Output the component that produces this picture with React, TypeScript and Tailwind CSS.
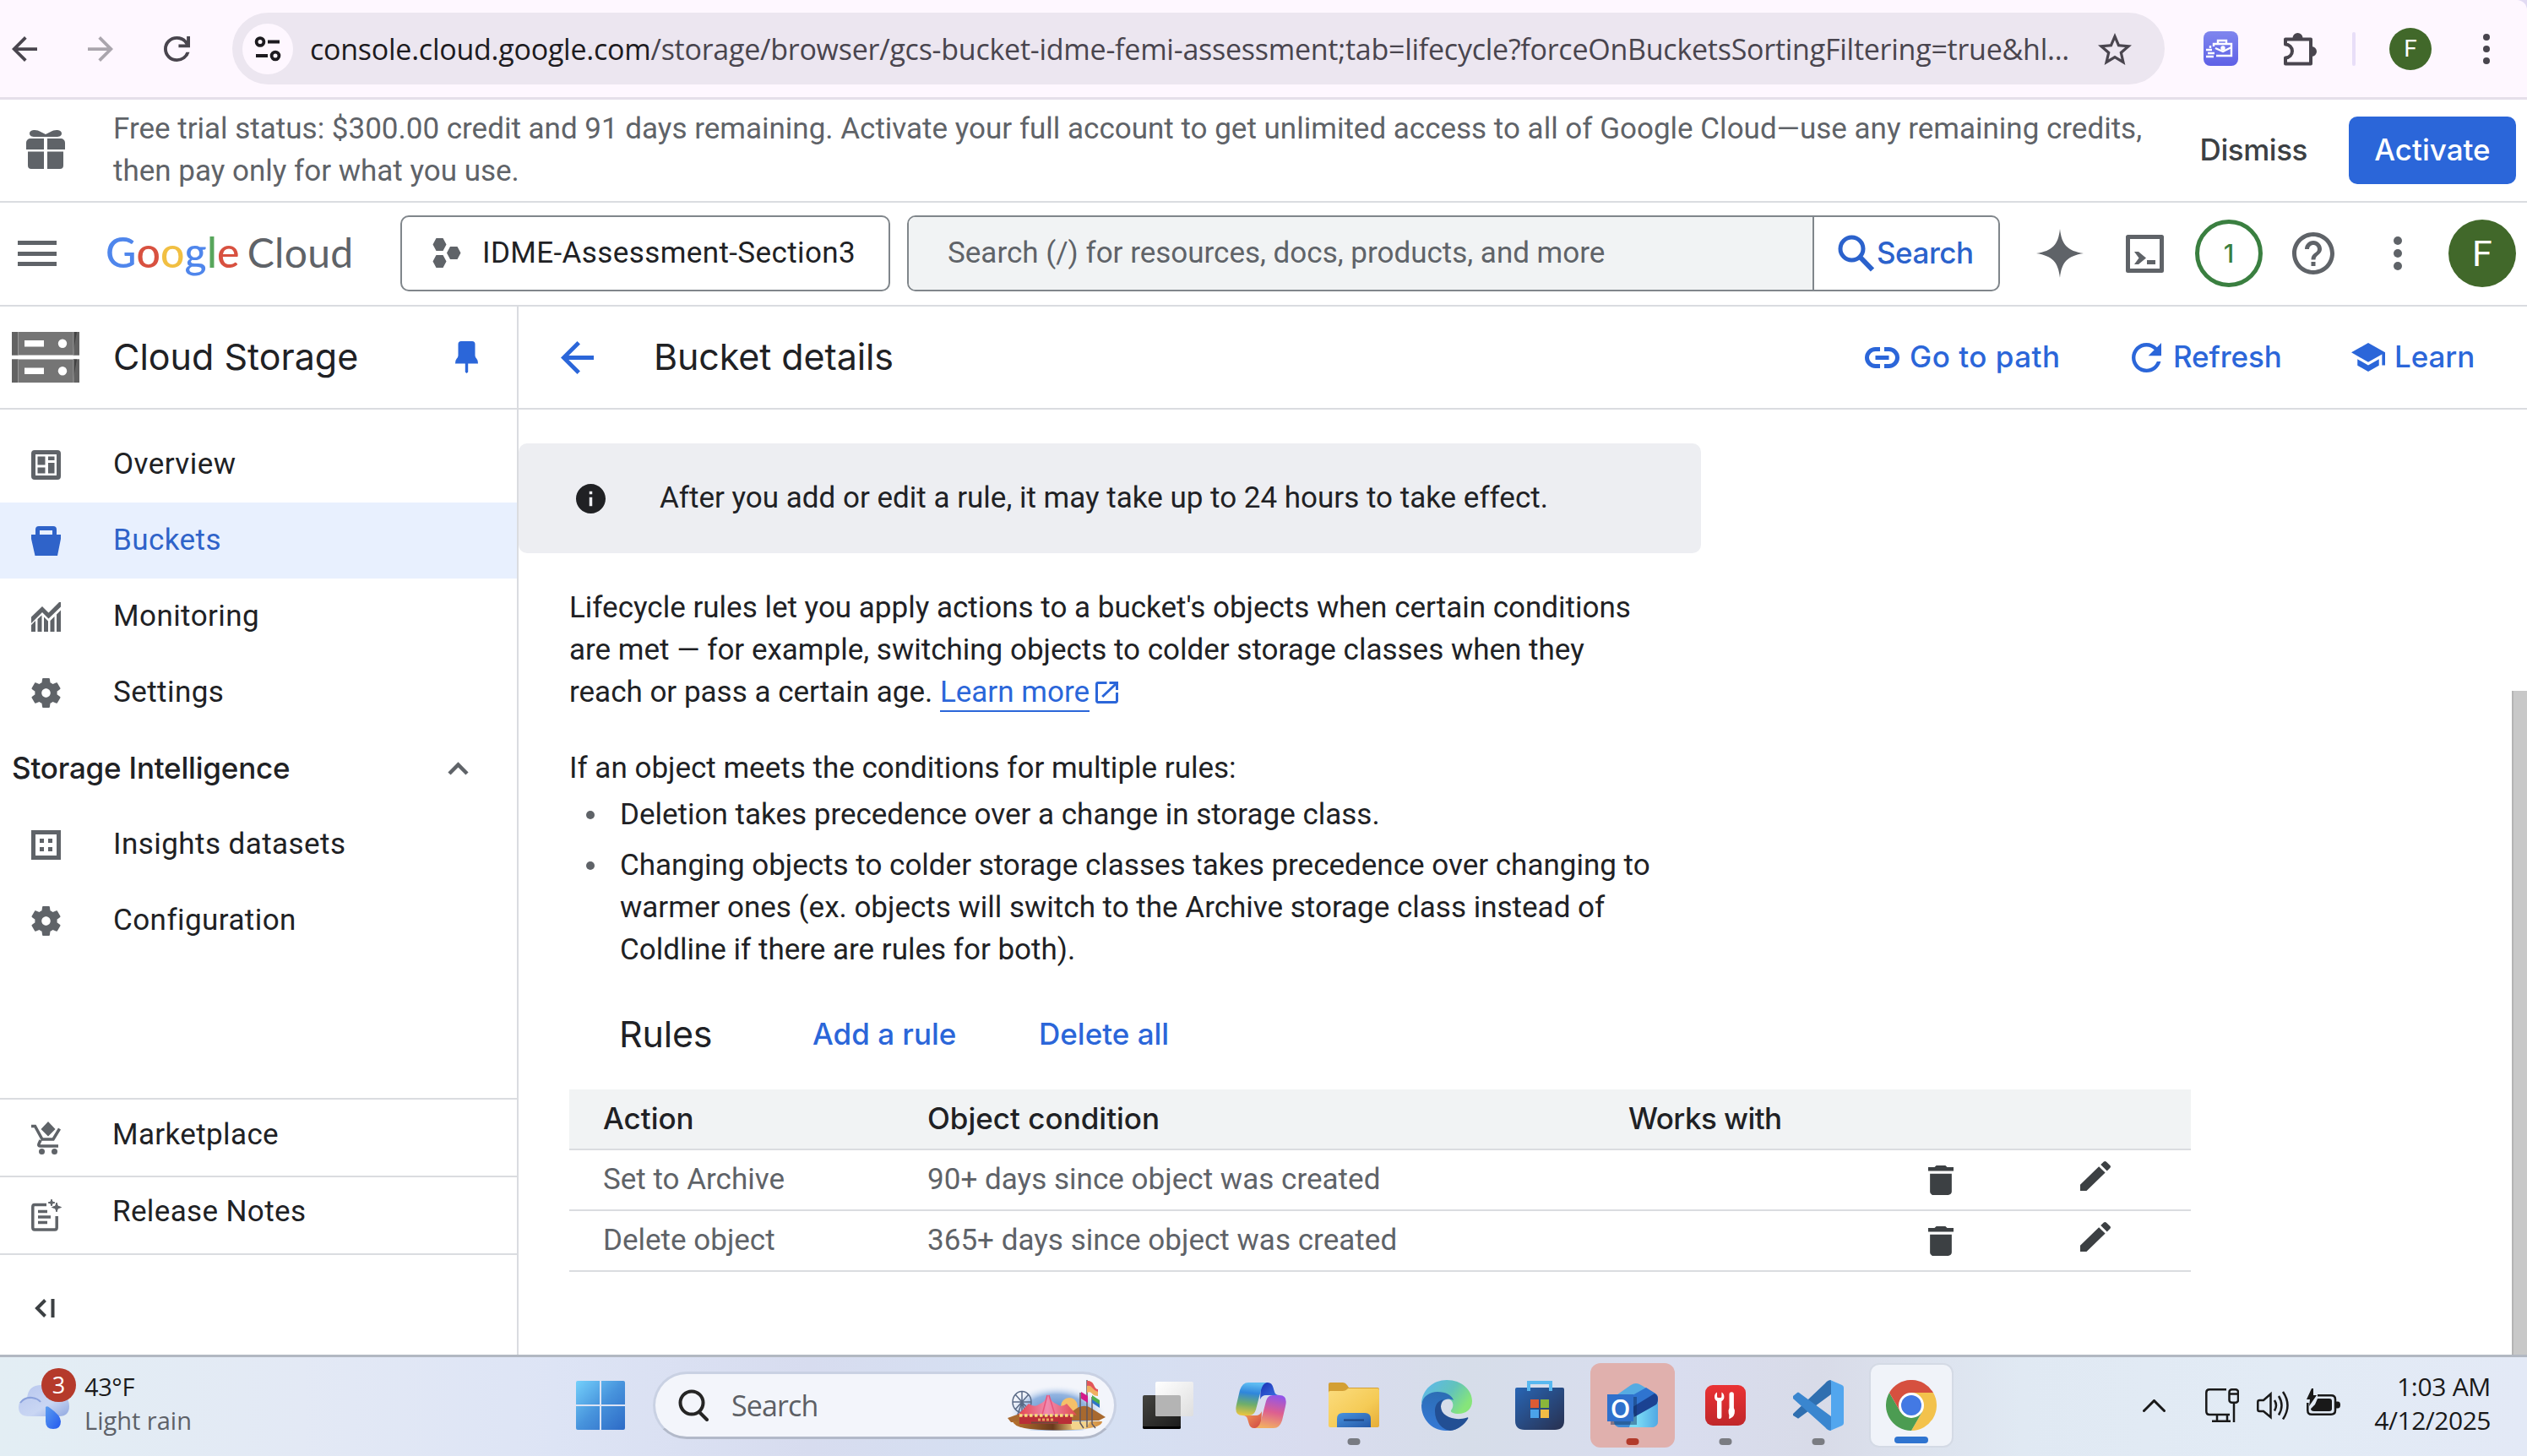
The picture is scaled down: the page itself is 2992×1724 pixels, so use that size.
import type { ReactNode } from "react";

type IconProps = { box: string; className: string; d?: string; children?: ReactNode };

function Icon({ box, className, d, children }: IconProps) {
  return (
    <svg viewBox={box} preserveAspectRatio="none" fill="currentColor" className={`block shrink-0 overflow-visible ${className}`}>
      {d ? <path d={d} /> : null}
      {children}
    </svg>
  );
}

const paths = {
  back: "M20 11H7.83l5.59-5.59L12 4l-8 8 8 8 1.41-1.41L7.83 13H20v-2z",
  forward: "M12 4l-1.41 1.41L16.17 11H4v2h12.17l-5.58 5.59L12 20l8-8z",
  reload:
    "M12 20q-3.35 0-5.675-2.325Q4 15.35 4 12q0-3.35 2.325-5.675Q8.65 4 12 4q1.725 0 3.3.713 1.575.712 2.7 2.037V4h2v7h-7V9h4.2q-.8-1.4-2.187-2.2Q13.625 6 12 6 9.5 6 7.75 7.75T6 12q0 2.5 1.75 4.25T12 18q1.925 0 3.475-1.1T17.65 14h2.1q-.7 2.65-2.85 4.325Q14.75 20 12 20Z",
  refresh:
    "M17.65 6.35C16.2 4.9 14.21 4 12 4c-4.42 0-7.99 3.58-7.99 8s3.57 8 7.99 8c3.73 0 6.84-2.55 7.73-6h-2.08c-.82 2.33-3.04 4-5.65 4-3.31 0-6-2.69-6-6s2.69-6 6-6c1.66 0 3.14.69 4.22 1.78L13 11h7V4l-2.35 2.35z",
  star: "M22 9.24l-7.19-.62L12 2 9.19 8.63 2 9.24l5.46 4.73L5.82 21 12 17.27 18.18 21l-1.63-7.03L22 9.24zM12 15.4l-3.76 2.27 1-4.28-3.32-2.88 4.38-.38L12 6.1l1.71 4.04 4.38.38-3.32 2.88 1 4.28L12 15.4z",
  help: "M11 18h2v-2h-2v2zm1-16C6.48 2 2 6.48 2 12s4.48 10 10 10 10-4.48 10-10S17.52 2 12 2zm0 18c-4.41 0-8-3.59-8-8s3.59-8 8-8 8 3.59 8 8-3.59 8-8 8zm0-14c-2.21 0-4 1.79-4 4h2c0-1.1.9-2 2-2s2 .9 2 2c0 2-3 1.75-3 5h2c0-2.25 3-2.5 3-5 0-2.21-1.79-4-4-4z",
  school: "M5 13.18v4L12 21l7-3.82v-4L12 17l-7-3.82zM12 3L1 9l11 6 9-4.91V17h2V9L12 3z",
  gear: "M19.43 12.98c.04-.32.07-.64.07-.98s-.03-.66-.07-.98l2.11-1.65c.19-.15.24-.42.12-.64l-2-3.46c-.12-.22-.39-.3-.61-.22l-2.49 1c-.52-.4-1.08-.73-1.69-.98l-.38-2.65C14.46 2.18 14.25 2 14 2h-4c-.25 0-.46.18-.49.42l-.38 2.65c-.61.25-1.17.59-1.69.98l-2.49-1c-.23-.09-.49 0-.61.22l-2 3.46c-.13.22-.07.49.12.64l2.11 1.65c-.04.32-.07.65-.07.98s.03.66.07.98l-2.11 1.65c-.19.15-.24.42-.12.64l2 3.46c.12.22.39.3.61.22l2.49-1c.52.4 1.08.73 1.69.98l.38 2.65c.03.24.24.42.49.42h4c.25 0 .46-.18.49-.42l.38-2.65c.61-.25 1.17-.59 1.69-.98l2.49 1c.23.09.49 0 .61-.22l2-3.46c.12-.22.07-.49-.12-.64l-2.11-1.65zM12 15c-1.66 0-3-1.34-3-3s1.34-3 3-3 3 1.34 3 3-1.34 3-3 3z",
  trash: "M6 19c0 1.1.9 2 2 2h8c1.1 0 2-.9 2-2V8H6v11zM19 4h-3.5l-1-1h-5l-1 1H5v2.4h14V4z",
  edit: "M3 17.25V21h3.75L17.81 9.94l-3.75-3.75L3 17.25zM20.71 7.04c.39-.39.39-1.02 0-1.41l-2.34-2.34c-.39-.39-1.02-.39-1.41 0l-1.83 1.83 3.75 3.75 1.83-1.83z",
  info: "M12 2C6.48 2 2 6.48 2 12s4.48 10 10 10 10-4.48 10-10S17.52 2 12 2zm1 15h-2v-6h2v6zm0-8h-2V7h2v2z",
  external:
    "M19 19H5V5h7V3H5c-1.11 0-2 .9-2 2v14c0 1.1.89 2 2 2h14c1.1 0 2-.9 2-2v-7h-2v7zM14 3v2h3.59l-9.83 9.83 1.41 1.41L19 6.41V10h2V3h-7z",
};

function BrowserBar() {
  return (
    <div className="h-[118px] shrink-0 bg-[#e2dbf3]">
      <div className="flex h-[118px] items-center rounded-tr-[12px] border-b-[3px] border-[#e5dfea] bg-[#fef7ff] pl-[14px] text-[#49454e]">
        <Icon box="4 4 16 16" className="h-[30px] w-[30px]" d={paths.back} />
        <Icon box="4 4 16 16" className="ml-[60px] h-[30px] w-[30px] text-[#aaa5ad]" d={paths.forward} />
        <Icon box="4 4 16 16" className="ml-[60px] h-[30px] w-[31px]" d={paths.reload} />
        <div className="ml-[50px] flex h-[85px] w-[2288px] items-center rounded-full bg-[#ece6f0] pl-3">
          <div className="flex h-[60px] w-[60px] items-center justify-center rounded-full bg-[#fef7ff] text-[#1d1b20]">
            <Icon box="0 0 32 30" className="h-[30px] w-[32px]">
              <g fill="none" stroke="currentColor" strokeWidth="3.8">
                <circle cx="7" cy="6.5" r="4.4" />
                <path d="M16 6.5h14M2 23h14" />
                <circle cx="25" cy="23" r="4.4" />
              </g>
            </Icon>
          </div>
          <div className="ml-5 w-[2105px] whitespace-nowrap font-['Open_Sans',sans-serif] text-[34px] leading-[50px] tracking-[-0.25px] text-[#49454e]">
            <span className="text-[#1d1b20]">console.cloud.google.com</span>
            /storage/browser/gcs-bucket-idme-femi-assessment;tab=lifecycle?forceOnBucketsSortingFiltering=true&amp;hl...
          </div>
          <Icon box="2 2 20 19" className="ml-3 h-[38px] w-[40px]" d={paths.star} />
        </div>
        <div className="ml-[46px] h-[41px] w-[41px] rounded-[8px] bg-gradient-to-b from-[#7f86ee] to-[#5f60e6]">
          <svg viewBox="0 0 41 41" className="h-[41px] w-[41px]" fill="none" stroke="#fff" strokeWidth="2.4">
            <path d="M17 14v-3h10v3M12 18v-3h21v14H15M33 19l-10 5-9-4M8 17v3M3 22h7M5 26h8M3 30h9" />
            <circle cx="23" cy="20" r="1.5" />
          </svg>
        </div>
        <Icon box="0 0 42 42" className="ml-[52px] h-[42px] w-[42px]">
          <path d="M12.5 8a6 6 0 0 1 12 0zM35 18a6 6 0 0 1 0 12z" />
          <path d="M4 15.500V9.500H34V38.500H4V31.500A7.800 7.800 0 0 0 4 15.500Z" fill="none" stroke="currentColor" strokeWidth="4" strokeLinejoin="round" />
        </Icon>
        <div className="ml-[41px] h-[40px] w-[4px] rounded-full bg-[#e8def8]" />
        <div className="ml-10 flex h-[50px] w-[50px] items-center justify-center rounded-full bg-[#41682a] font-['Roboto',sans-serif] text-[28px] text-white">F</div>
        <Icon box="0 0 8 38" className="ml-[61px] h-[38px] w-[8px]">
          <circle cx="4" cy="5" r="4" />
          <circle cx="4" cy="19" r="4" />
          <circle cx="4" cy="33" r="4" />
        </Icon>
      </div>
    </div>
  );
}

function TrialBanner() {
  return (
    <div className="flex h-[122px] shrink-0 items-center border-b-2 border-[#dadce0] pl-[31px] pr-[13px]">
      <Icon box="0 0 46 46" className="mb-[3px] h-[46px] w-[46px] text-[#5f6368]">
        <path d="M4 4c0-5 9-5 13-2l6 3 6-3c4-3 13-3 13 2 0 3-3 4-6 4H10C7 8 4 7 4 4z" />
        <path d="M5 10h16v13H0v-8a5 5 0 0 1 5-5zM25 10h16a5 5 0 0 1 5 5v8H25zM2 25.500h19V46H6a4 4 0 0 1-4-4zM25 25.500h19V42a4 4 0 0 1-4 4H25z" />
      </Icon>
      <p className="ml-[57px] w-[2440px] text-[35px] leading-[50px] text-[#5f6368]">
        Free trial status: $300.00 credit and 91 days remaining. Activate your full account to get unlimited access to all of Google Cloud—use any remaining credits,
        <br />
        then pay only for what you use.
      </p>
      <div className="ml-auto flex items-center font-['Inter',sans-serif] text-[35px] font-medium">
        <span className="pb-[2px] tracking-[-0.45px] text-[#3c4043]">Dismiss</span>
        <span className="ml-[49px] flex h-[80px] w-[198px] items-center justify-center rounded-[10px] bg-[#2b66d9] pb-[2px] text-white">Activate</span>
      </div>
    </div>
  );
}

function Header() {
  return (
    <div className="flex h-[123px] shrink-0 items-center border-b-2 border-[#dadce0] pb-px pl-[21px] text-[#5f6368]">
      <div className="flex w-[46px] flex-col gap-[7.5px]">
        <div className="h-[5px] bg-[#5f6368]" />
        <div className="h-[5px] bg-[#5f6368]" />
        <div className="h-[5px] bg-[#5f6368]" />
      </div>
      <div className="ml-[58px] flex w-[349px] items-baseline whitespace-nowrap pb-[3px] font-['Lato',sans-serif] leading-[60px]">
        <span className="text-[50px] font-medium tracking-[0.2px]">
          <span className="text-[#4f86ec]">G</span>
          <span className="text-[#d85140]">o</span>
          <span className="text-[#f1bf42]">o</span>
          <span className="text-[#4f86ec]">g</span>
          <span className="text-[#58a65c]">l</span>
          <span className="text-[#d85140]">e</span>
        </span>
        <span className="ml-[9px] text-[48px] tracking-[0.3px]">Cloud</span>
      </div>
      <div className="flex h-[90px] w-[580px] items-center rounded-[10px] border-[2px] border-[#80868b] pl-[36px]">
        <Icon box="0 0 34 36" className="h-[36px] w-[34px]">
          <path d="M4.500 0h8l4 7.500-4 7.500h-8L.5 7.500zM4.500 20h8l4 7.500-4 7.500h-8L.5 27.500zM21 10h8.500l4 7.500-4 7.500H21l-4-7.500z" />
        </Icon>
        <span className="ml-[25px] text-[35px] tracking-[0.4px] text-[#202124]">IDME-Assessment-Section3</span>
      </div>
      <div className="ml-5 flex h-[90px] w-[1294px] overflow-hidden rounded-[10px] border-[2px] border-[#80868b]">
        <div className="flex w-[1070px] items-center bg-[#f1f3f4] pl-[46px] text-[35px] text-[#5f6368]">Search (/) for resources, docs, products, and more</div>
        <div className="flex flex-1 items-center border-l-2 border-[#80868b] pl-[28px] font-['Inter',sans-serif] text-[35px] font-medium tracking-[-0.5px] text-[#2b62cc]">
          <Icon box="0 0 44 44" className="h-[44px] w-[44px]">
            <g fill="none" stroke="currentColor" strokeWidth="5">
              <circle cx="16.500" cy="16.500" r="13.500" />
              <path d="M26 26l15 15.500" strokeWidth="6" />
            </g>
          </Icon>
          <span className="ml-[2px] pb-[2px]">Search</span>
        </div>
      </div>
      <Icon box="0 0 56 58" className="ml-[43px] h-[58px] w-[56px]" d="M28 0C30 19 37 26 56 29C37 32 30 39 28 58C26 39 19 32 0 29C19 26 26 19 28 0Z" />
      <Icon box="0 0 45 45" className="ml-[50px] h-[45px] w-[45px]">
        <path d="M2.500 2.500h40v40h-40z" fill="none" stroke="currentColor" strokeWidth="5" strokeLinejoin="round" />
        <path d="M10 20h5l9 7.500-9 7.500h-5l5.500-7.500zM25 30h10v5H25z" />
      </Icon>
      <div className="ml-[37px] flex h-[80px] w-[80px] items-center justify-center rounded-full border-[5px] border-[#3a7f40] font-['Inter',sans-serif] text-[30px] font-medium text-[#3a7f40]">
        1
      </div>
      <Icon box="2 2 20 20" className="ml-[35px] h-[50px] w-[50px]" d={paths.help} />
      <Icon box="0 0 10 42" className="ml-[70px] h-[42px] w-[10px]">
        <circle cx="5" cy="6" r="5" />
        <circle cx="5" cy="21" r="5" />
        <circle cx="5" cy="36" r="5" />
      </Icon>
      <div className="ml-[55px] flex h-[80px] w-[80px] items-center justify-center rounded-full bg-[#41682a] text-[43px] text-white">F</div>
    </div>
  );
}

const navIcons: Record<string, ReactNode> = {
  overview: (
    <Icon box="0 0 35 35" className="h-[35px] w-[35px]">
      <rect x="2.500" y="2.500" width="30" height="30" rx="1.500" fill="none" stroke="currentColor" strokeWidth="5" />
      <path d="M7.500 7.500h9v10h-9zM20 7.500h7.500V12H20zM20 15h7.500v12.500H20zM7.500 20.500h9v7h-9z" />
    </Icon>
  ),
  buckets: (
    <Icon box="0 0 35 35" className="h-[35px] w-[35px]">
      <path d="M0 10h5V4a4 4 0 0 1 4-4h17a4 4 0 0 1 4 4v6h5v5l-4 20H4.500L0 15zM10 5v5h15V5z" fillRule="evenodd" />
    </Icon>
  ),
  monitoring: (
    <Icon box="0 0 35 35" className="h-[35px] w-[35px]">
      <path d="M0 17.500L13 5l7.500 7.500L33 0h2v5.500L20.500 19.500 13 12 0 25z" />
      <path d="M0 27l5-5v13H0zM7.500 20l5-4.500V35h-5zM15 17.500l5 5V35h-5zM22.500 22l5-5v18h-5zM30 14.500l5-5V35h-5z" />
    </Icon>
  ),
  gear: <Icon box="2 2 20 20" className="h-[35px] w-[35px]" d={paths.gear} />,
  insights: (
    <Icon box="0 0 35 35" className="h-[35px] w-[35px]">
      <path d="M2.500 2.500h30v30h-30z" fill="none" stroke="currentColor" strokeWidth="5" />
      <path d="M10 10h5v5h-5zM20 10h5v5h-5zM10 20h5v5h-5zM20 20h5v5h-5z" />
    </Icon>
  ),
  marketplace: (
    <Icon box="0 0 35 39" className="h-[39px] w-[35px]">
      <path d="M20 0l8.500 9L20 17.500 11.500 9z" />
      <path d="M0 5.500h4.500L13 21h13l7.500-12.500M11 22l-2 4.500q-1 2.500 2 2.500h21" fill="none" stroke="currentColor" strokeWidth="3.500" />
      <circle cx="12.500" cy="35.500" r="3.500" />
      <circle cx="27.500" cy="35.500" r="3.500" />
    </Icon>
  ),
  notes: (
    <Icon box="0 0 35 38" className="h-[38px] w-[35px]">
      <path d="M18 6.500H4Q1.800 6.500 1.800 9V33.500Q1.800 36 4 36H28Q30.200 36 30.200 33.500V20" fill="none" stroke="currentColor" strokeWidth="3.500" />
      <path d="M8 14.500h11M8 21h15M8 27.500h11" stroke="currentColor" strokeWidth="3.300" />
      <path d="M24 0l1 3 3 1-3 1-1 3-1-3-3-1 3-1zM30 4l1.400 4.100L35.500 9.500l-4.100 1.400L30 15l-1.400-4.100L24.500 9.500l4.100-1.400z" stroke="currentColor" />
    </Icon>
  ),
};

function NavItem({ icon, label, active }: { icon: string; label: string; active?: boolean }) {
  return (
    <div className={`flex h-[90px] items-center pl-[37px] ${active ? "bg-[#e8f0fe] text-[#2f63c9]" : "text-[#5f6368]"}`}>
      {navIcons[icon]}
      <span className={`ml-[62px] text-[35px] tracking-[0.44px] ${active ? "text-[#2f63c9]" : "text-[#202124]"}`}>{label}</span>
    </div>
  );
}

function Sidebar() {
  return (
    <aside className="flex w-[614px] shrink-0 flex-col border-r-2 border-[#dadce0]">
      <div className="flex h-[122px] shrink-0 items-center border-b-2 border-[#dadce0] pl-[14px]">
        <svg viewBox="0 0 80 60" className="h-[60px] w-[80px]">
          <path d="M0 0h80v27.500H0zM0 32.500h80V60H0z" fill="#757575" />
          <path d="M0 0h7v27.500H0zM0 32.500h7V60H0zM73 0h7v27.500h-7zM73 32.500h7V60h-7z" fill="#626262" />
          <path d="M73 0h4l-4 22zM73 32.500h4l-4 22z" fill="#424242" />
          <path d="M7.500 0v27.500M7.500 32.500V60M73 0v27.500M73 32.500V60" stroke="#9a9a9a" strokeWidth="1" />
          <path d="M15 10h23v7.500H15zM15 42.500h23V50H15z" fill="#fff" />
          <circle cx="60" cy="13.800" r="5.200" fill="#fff" />
          <circle cx="60" cy="46.300" r="5.200" fill="#fff" />
        </svg>
        <span className="ml-[40px] w-[405px] pb-[2px] font-['Inter',sans-serif] text-[43px] text-[#202124]">Cloud Storage</span>
        <Icon box="0 0 27 38" className="h-[38px] w-[27px] text-[#2b66d9]">
          <path d="M7 0h13q3.500 0 3.500 3.500V17q0 2 2 4 1.500 1.500 1.500 5.500H0Q0 22.500 1.500 21q2-2 2-4V3.500Q3.500 0 7 0zM11.800 26h3.400v10.500L13.500 38l-1.700-1.500z" />
        </Icon>
      </div>
      <nav className="flex flex-col pt-5">
        <NavItem icon="overview" label="Overview" />
        <NavItem icon="buckets" label="Buckets" active />
        <NavItem icon="monitoring" label="Monitoring" />
        <NavItem icon="gear" label="Settings" />
        <div className="flex h-[90px] items-center justify-between pl-[14px] pr-[57px]">
          <span className="pb-[2px] font-['Inter',sans-serif] text-[35px] font-medium tracking-[-0.2px] text-[#202124]">Storage Intelligence</span>
          <Icon box="0 0 25 15" className="h-[15px] w-[25px] text-[#5f6368]">
            <path d="M2 13L12.500 2.500 23 13" fill="none" stroke="currentColor" strokeWidth="4.500" />
          </Icon>
        </div>
        <NavItem icon="insights" label="Insights datasets" />
        <NavItem icon="gear" label="Configuration" />
      </nav>
      <div className="mt-auto flex flex-col text-[35px] tracking-[0.37px] text-[#5f6368]">
        <div className="flex h-[94px] items-center border-y-2 border-[#dadce0] pl-[37px]">
          {navIcons.marketplace}
          <span className="ml-[61px] pb-[5px] text-[#202124]">Marketplace</span>
        </div>
        <div className="flex h-[92px] items-center border-b-2 border-[#dadce0] pl-[37px]">
          {navIcons.notes}
          <span className="ml-[61px] pb-2 text-[#202124]">Release Notes</span>
        </div>
        <div className="flex h-[118px] items-center pl-[41px] pt-2">
          <Icon box="0 0 24 22" className="h-[22px] w-[24px] text-[#3c4043]">
            <path d="M12.500 1.500L3 11l9.500 9.500M21.500 0v22" fill="none" stroke="currentColor" strokeWidth="4" />
          </Icon>
        </div>
      </div>
    </aside>
  );
}

const rules = [
  { action: "Set to Archive", condition: "90+ days since object was created" },
  { action: "Delete object", condition: "365+ days since object was created" },
];

function Main() {
  return (
    <main className="flex min-w-0 flex-1 flex-col">
      <div className="flex h-[122px] shrink-0 items-center border-b-2 border-[#dadce0] pl-[50px] font-['Inter',sans-serif] text-[35px] font-medium text-[#2b66d9]">
        <Icon box="4 4 16 16" className="h-[39px] w-[39px]" d={paths.back} />
        <span className="ml-[71px] w-[1434px] pb-[2px] text-[43px] font-normal tracking-[-0.1px] text-[#202124]">Bucket details</span>
        <Icon box="0 0 41 25" className="h-[25px] w-[41px]">
          <path d="M18 2.500h-5.500a10 10 0 0 0 0 20H18M23 2.500h5.500a10 10 0 0 1 0 20H23M12.500 12.500h16" fill="none" stroke="currentColor" strokeWidth="5" />
        </Icon>
        <span className="ml-[12px] w-[263px] pb-[2px] tracking-[0.5px]">Go to path</span>
        <Icon box="4 4 16 16" className="h-[35px] w-[35px]" d={paths.refresh} />
        <span className="ml-[14px] w-[211px] pb-[2px] tracking-[-0.1px]">Refresh</span>
        <Icon box="1 3 22 18" className="h-[34px] w-[40px]" d={paths.school} />
        <span className="ml-[11px] pb-[2px] tracking-[-0.1px]">Learn</span>
      </div>
      <div className="flex min-h-0 flex-1 justify-between">
        <div className="flex flex-col pt-10 text-[35px] leading-[50px] text-[#202124]">
          <div className="flex h-[130px] w-[1400px] items-center rounded-[10px] bg-[#edeef2] pl-[68px]">
            <Icon box="2 2 20 20" className="h-[35px] w-[35px]" d={paths.info} />
            <span className="ml-[64px]">After you add or edit a rule, it may take up to 24 hours to take effect.</span>
          </div>
          <div className="flex flex-col pl-[60px] pt-10">
            <p className="whitespace-nowrap">
              Lifecycle rules let you apply actions to a bucket&apos;s objects when certain conditions
              <br />
              are met — for example, switching objects to colder storage classes when they
              <br />
              reach or pass a certain age.{" "}
              <a className="inline-block h-[48px] border-b-2 border-[#2b66d9] align-top text-[#2b66d9]">Learn more</a>
              <span className="ml-[7px] inline-block pt-[12px] align-top text-[#2b66d9]">
                <Icon box="3 3 18 18" className="h-[26px] w-[27px]" d={paths.external} />
              </span>
            </p>
            <p className="mt-10">If an object meets the conditions for multiple rules:</p>
            <ul className="mt-[5px] flex flex-col gap-[10px] pl-5">
              <li className="flex">
                <span className="mt-5 h-[10px] w-[10px] rounded-full bg-[#5f6368]" />
                <span className="ml-[30px]">Deletion takes precedence over a change in storage class.</span>
              </li>
              <li className="flex">
                <span className="mt-5 h-[10px] w-[10px] rounded-full bg-[#5f6368]" />
                <span className="ml-[30px]">
                  Changing objects to colder storage classes takes precedence over changing to
                  <br />
                  warmer ones (ex. objects will switch to the Archive storage class instead of
                  <br />
                  Coldline if there are rules for both).
                </span>
              </li>
            </ul>
            <div className="mt-[49px] flex h-[50px] items-center pl-[59px] font-['Inter',sans-serif] font-medium text-[#2b66d9]">
              <span className="w-[229px] text-[43px] font-normal tracking-[-0.2px] text-[#202124]">Rules</span>
              <span className="w-[268px]">Add a rule</span>
              <span>Delete all</span>
            </div>
            <div className="mt-[41px] w-[1920px]">
              <div className="grid h-[72px] grid-cols-[384px_830px_355px_180px_171px] items-center border-b-2 border-[#dadce0] bg-[#f1f3f4] pb-[2px] font-['Inter',sans-serif] font-medium">
                <span className="pl-10">Action</span>
                <span className="pl-10">Object condition</span>
                <span className="pl-10 tracking-[-0.56px]">Works with</span>
              </div>
              {rules.map((rule) => (
                <div key={rule.action} className="grid h-[72px] grid-cols-[384px_830px_355px_180px_171px] items-center border-b-2 border-[#dadce0] text-[#5f6368]">
                  <span className="pl-10">{rule.action}</span>
                  <span className="pl-10 tracking-[0.03px]">{rule.condition}</span>
                  <span />
                  <Icon box="5 3 14 18" className="ml-10 h-[35px] w-[30px] text-[#3c4043]" d={paths.trash} />
                  <Icon box="3 3 18 18" className="mb-[9px] ml-10 h-[35px] w-[36px] text-[#3c4043]" d={paths.edit} />
                </div>
              ))}
            </div>
          </div>
        </div>
        <div className="flex w-[18px] flex-col pt-[333px]">
          <div className="flex-1 border-l-2 border-[#b4b4b4] bg-[#c8c8c8]" />
        </div>
      </div>
    </main>
  );
}

function Carnival() {
  return (
    <svg viewBox="0 0 116 60" className="h-[60px] w-[116px]">
      <defs>
        <radialGradient id="sky" cx="0.5" cy="0.6" r="0.5">
          <stop offset="0" stopColor="#4f86c8" />
          <stop offset="0.65" stopColor="#93b4e0" />
          <stop offset="1" stopColor="#f3f6fc" stopOpacity="0" />
        </radialGradient>
        <linearGradient id="tent" x1="0" y1="0" x2="1" y2="0">
          <stop offset="0" stopColor="#e2434b" />
          <stop offset="0.5" stopColor="#f08bb0" />
          <stop offset="1" stopColor="#e04a4c" />
        </linearGradient>
        <linearGradient id="ground" x1="0" y1="0" x2="1" y2="0">
          <stop offset="0" stopColor="#b9742f" />
          <stop offset="0.45" stopColor="#6a3a1c" />
          <stop offset="0.7" stopColor="#f0cc7c" />
          <stop offset="1" stopColor="#d08a3e" />
        </linearGradient>
      </defs>
      <ellipse cx="58" cy="32" rx="58" ry="33" fill="url(#sky)" />
      <g fill="none" stroke="#5a6a86" strokeWidth="1.500">
        <ellipse cx="17" cy="26" rx="11" ry="12.500" />
        <path d="M17 13v26M6 26h22M9 17l16 18M25 17L9 35M17 26l-6 18M17 26l6 18" />
      </g>
      <circle cx="73" cy="31" r="10" fill="#f5c069" />
      <path d="M74 40q14-15 26-6l16 10-8 4H72z" fill="#a8692f" />
      <path d="M0 45l14-5v10H4z" fill="#a8692f" />
      <path d="M6 49h106q0 10-50 10.500Q8 60 6 49z" fill="url(#ground)" />
      <path d="M74 49h24l-6 9H76z" fill="#f3d48c" />
      <path d="M14 42h62v10H14z" fill="#b92f37" />
      <path d="M12 41.500L25 28q7 5 12 1 8-3 11-12 3 9 11 12 5 4 11-1l12 13.500z" fill="url(#tent)" />
      <path d="M47 18l-6 23M49 18l7 23" stroke="#e8557c" strokeWidth="1.500" />
      <path d="M14 42h66" stroke="#f9dc7c" strokeWidth="3.500" strokeDasharray="3.500 2.500" />
      <path d="M28 50.500h32" stroke="#6b4a3c" strokeWidth="2" />
      <path d="M36 47h18" stroke="#e8a45c" strokeWidth="3" strokeDasharray="3 2" />
      <path d="M94 0v56M86 15v36l4 6M100 20v32l4 5" stroke="#5d5560" strokeWidth="1.400" fill="none" />
      <path d="M94 1q6 0 8 5t5 6v7q-5 0-7-3t-6-1z" fill="#f0b060" />
      <path d="M94 1q6 0 8 5t5 5v3q-5-2-7-5t-6-2z" fill="#e2555c" />
      <path d="M87 14l8 5v8l-8-5z" fill="#d51a8c" />
      <path d="M100 18l9 6v8l-9-6z" fill="#4fb04c" />
      <path d="M100 23l9 6v4l-9-6z" fill="#2f74c8" />
    </svg>
  );
}

type AppCell = { name: string; art: ReactNode; frame?: string; mark?: string };

const apps: AppCell[] = [
  {
    name: "Task view",
    art: (
      <svg viewBox="0 0 60 56" className="h-[56px] w-[60px]">
        <defs>
          <linearGradient id="tvw" x1="0" y1="0" x2="1" y2="1">
            <stop offset="0" stopColor="#fff" />
            <stop offset="1" stopColor="#dedede" />
          </linearGradient>
          <linearGradient id="tvb" x1="0" y1="0" x2="1" y2="1">
            <stop offset="0" stopColor="#444440" />
            <stop offset="1" stopColor="#1a1a1a" />
          </linearGradient>
        </defs>
        <rect x="0" y="16" width="45" height="40" rx="2" fill="url(#tvb)" />
        <path d="M0 53h45v1a2 2 0 0 1-2 2H2a2 2 0 0 1-2-2z" fill="#000" />
        <rect x="15" y="0" width="45" height="41" rx="2" fill="url(#tvw)" />
        <path d="M15 16h28a2 2 0 0 1 2 2v23H17a2 2 0 0 1-2-2z" fill="#b4b4b4" />
      </svg>
    ),
  },
  {
    name: "Copilot",
    art: (
      <svg viewBox="0 0 60 56" className="h-[56px] w-[60px]">
        <defs>
          <linearGradient id="cpa" x1="0.3" y1="0" x2="0.2" y2="1">
            <stop offset="0" stopColor="#5fbcf2" />
            <stop offset="0.3" stopColor="#2f86dc" />
            <stop offset="0.65" stopColor="#6fae6a" />
            <stop offset="1" stopColor="#efc63f" />
          </linearGradient>
          <linearGradient id="cpb" x1="0.6" y1="0" x2="0.4" y2="1">
            <stop offset="0" stopColor="#9355e8" />
            <stop offset="0.5" stopColor="#dd5f90" />
            <stop offset="1" stopColor="#f2ae62" />
          </linearGradient>
          <linearGradient id="cpc" x1="0" y1="0" x2="1" y2="1">
            <stop offset="0" stopColor="#1a2fb4" />
            <stop offset="1" stopColor="#3f7be8" />
          </linearGradient>
          <linearGradient id="cpd" x1="0" y1="0" x2="1" y2="1">
            <stop offset="0" stopColor="#f5a057" />
            <stop offset="1" stopColor="#d04744" />
          </linearGradient>
        </defs>
        <path d="M30 1h8q5 0 6.500 6l1.500 5q1 4 6 4H36q-5 0-7 5z" fill="url(#cpc)" />
        <path d="M30 55h-8q-5 0-6.500-6L14 44q-1-4-6-4h16q5 0 7-5z" fill="url(#cpd)" />
        <path d="M15 1h22q-5 1-7 9l-6 23q-2 7-8 7H8q-10 0-7-13L5 10Q8 1 15 1z" fill="url(#cpa)" />
        <path d="M45 55H23q5-1 7-9l6-23q2-7 8-7h8q10 0 7 13l-4 17q-3 9-10 9z" fill="url(#cpb)" />
      </svg>
    ),
  },
  {
    name: "File Explorer",
    mark: "w-[15px] bg-[#787b82]",
    art: (
      <svg viewBox="0 0 60 54" className="h-[54px] w-[60px]">
        <defs>
          <linearGradient id="fe" x1="0" y1="0" x2="1" y2="1">
            <stop offset="0" stopColor="#fbdc7e" />
            <stop offset="0.6" stopColor="#f5cb56" />
            <stop offset="1" stopColor="#e6ad38" />
          </linearGradient>
          <linearGradient id="feb" x1="0" y1="0" x2="1" y2="1">
            <stop offset="0" stopColor="#4793df" />
            <stop offset="1" stopColor="#2659a8" />
          </linearGradient>
        </defs>
        <path d="M0 2a2 2 0 0 1 2-2h15q3 0 5 3l2 3h34a2 2 0 0 1 2 2v12H0z" fill="#d39f34" />
        <path d="M0 12q0-2 2-2h15q3 0 5-2l1-1h35q2 0 2 2v42q0 2-2 2H2q-2 0-2-2z" fill="url(#fe)" />
        <path d="M10 53V43q0-7 7-7h26q7 0 7 7v10z" fill="url(#feb)" />
        <path d="M18 44.500h24" stroke="#1d4584" strokeWidth="2" />
      </svg>
    ),
  },
  {
    name: "Edge",
    art: (
      <svg viewBox="0 0 60 60" className="h-[60px] w-[60px]">
        <defs>
          <linearGradient id="eg" x1="0" y1="0" x2="1" y2="0.5">
            <stop offset="0" stopColor="#5cb6f3" />
            <stop offset="0.6" stopColor="#62c3bb" />
            <stop offset="1" stopColor="#86e57a" />
          </linearGradient>
          <linearGradient id="eb" x1="0.5" y1="0" x2="0.3" y2="1">
            <stop offset="0" stopColor="#2c6db4" />
            <stop offset="1" stopColor="#3579d6" />
          </linearGradient>
        </defs>
        <path d="M0 28C1 11 14 0 30 0c18 0 30 12 30 25 0 10-8 15-16 15-6 0-10-2-9-4 5-6 2-14-6-14C18 14 6 16 0 28z" fill="url(#eg)" />
        <path d="M0 30C1 19 10 14 19 14c10 0 17 4 19 10-8-4-15 0-15 8 0 12 10 24 22 24-5 3-10 4-16 4C12 60 0 46 0 30z" fill="url(#eb)" />
        <path d="M26 23c-8 2-10 8-10 14 0 13 9 22 18 23 9-1 17-7 21-14 1-1 0-2-1-1.500-15 5-31-2-31-13 0-4 1-6 3-8.500z" fill="#224f94" />
      </svg>
    ),
  },
  {
    name: "Store",
    art: (
      <svg viewBox="0 0 58 58" className="h-[58px] w-[58px]">
        <defs>
          <linearGradient id="ms" x1="0" y1="0" x2="1" y2="1">
            <stop offset="0" stopColor="#2865b4" />
            <stop offset="1" stopColor="#28304f" />
          </linearGradient>
        </defs>
        <path d="M0 10q0-2 2-2h54q2 0 2 2v37q0 11-11 11H11Q0 58 0 47z" fill="url(#ms)" />
        <path d="M16 12V2h26v10" fill="none" stroke="#58b8f0" strokeWidth="4" />
        <path d="M18 22h10v10H18z" fill="#dd5b34" />
        <path d="M30 22h10v10H30z" fill="#8ab63a" />
        <path d="M18 34h10v10H18z" fill="#4ba3ea" />
        <path d="M30 34h10v10H30z" fill="#f2bc45" />
      </svg>
    ),
  },
  {
    name: "Outlook",
    frame: "bg-[#e0b0ad]",
    mark: "w-[15px] bg-[#b23a2a]",
    art: (
      <div className="relative h-[52px] w-[60px]">
        <svg viewBox="0 0 60 52" className="h-[52px] w-[60px]">
          <defs>
            <linearGradient id="ol" x1="0" y1="0" x2="1" y2="0">
              <stop offset="0.3" stopColor="#7bdcf6" />
              <stop offset="1" stopColor="#50a8e4" />
            </linearGradient>
          </defs>
          <path d="M8 16L28 2q6-4 12 0l17 10q3 2 3 6v26q0 8-8 8H16q-8 0-8-8z" fill="#56abe2" />
          <path d="M30 14L46 5l11 7q3 2 3 6L30 36z" fill="#2f74d0" />
          <path d="M30 28l26-16q4 2 4 7t-4 8L32 40z" fill="#1b4292" />
          <path d="M24 52q0-8 6-11l30-17v20q0 8-8 8z" fill="url(#ol)" />
          <path d="M8 40l22-1-4 13H16q-8 0-8-8z" fill="#3f8ad4" />
          <path d="M4 16h31v33H4z" fill="#122f5c" opacity="0.450" />
          <path d="M0 13h31v32H0z" fill="#2f70cc" />
        </svg>
        <span className="absolute left-0 top-[13px] flex h-[32px] w-[31px] items-center justify-center font-['Open_Sans',sans-serif] text-[30px] font-semibold text-white">O</span>
      </div>
    ),
  },
  {
    name: "Tools",
    mark: "w-[15px] bg-[#7a7c82]",
    art: (
      <svg viewBox="0 0 48 48" className="h-[48px] w-[48px]">
        <defs>
          <linearGradient id="tl" x1="0" y1="0" x2="0" y2="1">
            <stop offset="0" stopColor="#ea3234" />
            <stop offset="1" stopColor="#c0272a" />
          </linearGradient>
        </defs>
        <rect width="48" height="48" rx="9" fill="url(#tl)" />
        <path d="M14 8.500q-3 1.500-3 5.500 0 3.500 3 5v18.500q0 2.500 2.700 2.500t2.700-2.500V19q3-1.500 3-5 0-4-3-5.500v5q0 1.500-1.500 1.500h-2.400Q14 15 14 13.500z" fill="#fff" />
        <path d="M28.500 11q0-2.700 2.700-2.700t2.700 2.700v16q1.800 3 .800 6.500-1 4.500-6 6.500-1 0-.5-2 .5-2-.5-4.500-.800-3.500 .8-6.500z" fill="#fff" />
      </svg>
    ),
  },
  {
    name: "Code",
    mark: "w-[15px] bg-[#7a7c82]",
    art: (
      <svg viewBox="0 0 60 60" className="h-[60px] w-[60px]">
        <path d="M0 40l38-36q3-4 7-4v17L7 45q-1 1-2 0l-5-3z" fill="#2f6fb0" />
        <path d="M0 19l5-4q1-1 2 0l38 28v17q-4 0-7-4L0 22q-1-1 0-3z" fill="#3a86cf" />
        <path d="M44 0l14 6q2 1 2 3v42q0 2-2 3l-14 6q1-1 1-4V4q0-3-1-4z" fill="#52a6ee" />
      </svg>
    ),
  },
  {
    name: "Chrome",
    frame: "border-[2px] border-[#d4dae5] bg-[#f0f3f9]",
    mark: "w-[40px] bg-[#2f74d0]",
    art: (
      <svg viewBox="0 0 60 60" className="h-[60px] w-[60px]">
        <path d="M30 15h26a30 30 0 0 1-26 45l13-22.500z" fill="#f3c24c" />
        <path d="M17 37.500L4 15a30 30 0 0 0 26 45l13-22.500z" fill="#4c9c52" />
        <path d="M30 15h26A30 30 0 0 0 4 15l13 22.500z" fill="#d6503f" />
        <circle cx="30" cy="30" r="15" fill="#fff" />
        <circle cx="30" cy="30" r="12" fill="#4379e4" />
      </svg>
    ),
  },
];

function Taskbar() {
  return (
    <footer className="flex h-[120px] shrink-0 items-center border-t-[3px] border-[#b2b8c2] bg-[linear-gradient(90deg,#e3eef4_0%,#e3e9f5_12%,#dde4f5_22%,#d7dcef_32%,#d5e1f3_42%,#d9dcef_52%,#d6dde9_58%,#d9ddef_66%,#d8dbe8_72%,#e0e9f3_80%,#e2ebf5_90%,#e3e9f6_100%)] pb-[3px] font-['Open_Sans',sans-serif]">
      <div className="relative mb-[16px] ml-[22px] h-[72px] w-[68px]">
        <svg viewBox="0 0 68 72" className="h-[72px] w-[68px]">
          <defs>
            <linearGradient id="cl" x1="0" y1="0" x2="1" y2="1">
              <stop offset="0" stopColor="#b7c6ee" />
              <stop offset="0.6" stopColor="#c9d6f3" />
              <stop offset="1" stopColor="#90a8e0" />
            </linearGradient>
            <linearGradient id="dr" x1="0" y1="0" x2="1" y2="1">
              <stop offset="0" stopColor="#5b9df0" />
              <stop offset="1" stopColor="#2459ee" />
            </linearGradient>
          </defs>
          <path d="M10 36q1-16 17-16 12 0 17 14 16-3 16 11 0 12-12 12H12Q0 57 0 46q0-9 10-10z" fill="url(#cl)" />
          <path d="M2 41q5-7 14-6 7 1 10 5" fill="none" stroke="#8ba2dc" strokeWidth="2" />
          <path d="M32 46q2-2 5 1 13 9 13 16 0 9-9 9t-9-9z" fill="url(#dr)" />
        </svg>
        <div className="absolute left-[27px] top-0 flex h-[40px] w-[41px] items-center justify-center rounded-full bg-[#b53a2b] text-[27px] text-white">3</div>
      </div>
      <div className="mb-[5px] ml-[10px] flex w-[201px] flex-col text-[29px] leading-[40px] text-[#1b1b1b]">
        <span className="tracking-[-0.4px]">43°F</span>
        <span className="text-[#5d6168]">Light rain</span>
      </div>
      <svg viewBox="0 0 58 58" className="ml-[381px] h-[58px] w-[58px]">
        <defs>
          <linearGradient id="win" x1="0" y1="0" x2="1" y2="1">
            <stop offset="0" stopColor="#74d0fb" />
            <stop offset="0.5" stopColor="#4793dc" />
            <stop offset="1" stopColor="#2d6ac6" />
          </linearGradient>
        </defs>
        <path d="M2 0h26v28H0V2a2 2 0 0 1 2-2zM30 0h26a2 2 0 0 1 2 2v26H30zM0 30h28v28H2a2 2 0 0 1-2-2zM30 30h28v26a2 2 0 0 1-2 2H30z" fill="url(#win)" />
      </svg>
      <div className="ml-[33px] flex h-[80px] w-[549px] items-center rounded-full border-[3px] border-[#c9d1e3] border-b-[#b2b9c9] bg-[#f3f5fb] pl-[27px] pr-[10px]">
        <svg viewBox="0 0 36 38" className="h-[38px] w-[36px]" fill="none" stroke="#252525" strokeWidth="4">
          <circle cx="16" cy="16" r="13.500" />
          <path d="M25 27l9 9" strokeLinecap="round" />
        </svg>
        <span className="ml-[27px] mr-auto text-[34px] tracking-[-0.85px] text-[#5d5f65]">Search</span>
        <Carnival />
      </div>
      <div className="ml-[6px] flex">
        {apps.map((app) => (
          <div key={app.name} className="flex w-[110px] justify-center">
            <div className={`relative flex h-[100px] w-[100px] items-center justify-center rounded-[12px] ${app.frame ?? ""}`}>
              {app.art}
              {app.mark ? <span className={`absolute bottom-[3px] left-1/2 h-[8px] -translate-x-1/2 rounded-full ${app.mark}`} /> : null}
            </div>
          </div>
        ))}
      </div>
      <div className="ml-[219px] flex items-center text-[#191919]">
        <svg viewBox="0 0 27 15" className="h-[15px] w-[27px]" fill="none" stroke="currentColor" strokeWidth="3" strokeLinecap="round">
          <path d="M1.500 13.500l12-12 12 12" />
        </svg>
        <svg viewBox="0 0 40 40" className="ml-[47px] h-[40px] w-[40px]" fill="none" stroke="currentColor" strokeWidth="2.500">
          <path d="M25 1.300H5Q1.300 1.300 1.300 5V27Q1.300 31 5 31H29M14 31v8M26 31v8M8 38.700h22M34 17v23M29 6.500h10" />
          <rect x="28.500" y="1.300" width="10.500" height="15.500" rx="3" />
        </svg>
        <svg viewBox="0 0 40 34" className="ml-[21px] h-[34px] w-[40px]" fill="none" stroke="currentColor" strokeWidth="2.500">
          <path d="M1.300 13q0-2 2-2H8L16.500 3.500V31L8 24H3.300q-2 0-2-2zM21 11q4 6 0 12.500M26 6q7 11 0 22.500M31 1q11 16 0 32.500" />
        </svg>
        <svg viewBox="0 0 40 32" className="mb-[8px] ml-[19px] h-[32px] w-[40px]" fill="none" stroke="currentColor" strokeWidth="2.500">
          <path d="M13 8.300H29Q34 8.300 34 13V26Q34 30.700 29 30.700H6Q1.300 30.700 1.300 26V17" />
          <path d="M13 12h14q3 0 3 3v9q0 3-3 3H9q-4 0-4-3l5-5zM35 15.500h2q3 0 3 4t-3 4h-2zM6 0L0 13h4L3 21l9-13H8V0z" fill="currentColor" stroke="none" />
        </svg>
        <div className="mb-[4px] ml-[38px] flex w-[140px] flex-col items-end whitespace-nowrap text-[30px] leading-[40px]">
          <span className="tracking-[-0.3px]">1:03 AM</span>
          <span className="tracking-[-0.49px]">4/12/2025</span>
        </div>
      </div>
    </footer>
  );
}

export default function App() {
  return (
    <div className="flex h-[1724px] w-[2992px] flex-col overflow-hidden bg-white font-['Roboto',sans-serif]">
      <BrowserBar />
      <TrialBanner />
      <Header />
      <div className="flex min-h-0 flex-1">
        <Sidebar />
        <Main />
      </div>
      <Taskbar />
    </div>
  );
}
